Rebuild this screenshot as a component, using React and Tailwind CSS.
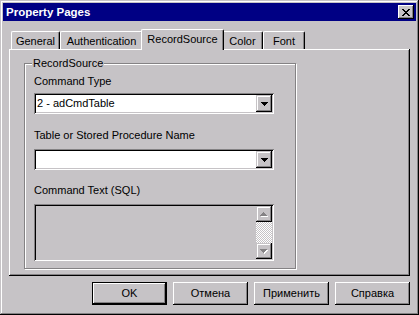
import React from "react";

const tabs = [
  { name: "General", w: "w-[49px]" },
  { name: "Authentication", w: "w-[83px]" },
  { name: "RecordSource", w: "w-[83px]", active: true },
  { name: "Color", w: "w-[41px]" },
  { name: "Font", w: "w-[42px]" },
];

function CloseGlyph() {
  return (
    <svg width="8" height="7" viewBox="0 0 8 7" shapeRendering="crispEdges">
      <path
        d="M0 0h2v1H0zM6 0h2v1H6zM1 1h2v1H1zM5 1h2v1H5zM2 2h4v1H2zM3 3h2v1H3zM2 4h4v1H2zM1 5h2v1H1zM5 5h2v1H5zM0 6h2v1H0zM6 6h2v1H6z"
        fill="#000"
      />
    </svg>
  );
}

function DownArrow({ color = "#000" }) {
  return (
    <svg width="7" height="4" viewBox="0 0 7 4" shapeRendering="crispEdges">
      <path d="M0 0h7v1H0zM1 1h5v1H1zM2 2h3v1H2zM3 3h1v1H3z" fill={color} />
    </svg>
  );
}

function DisabledArrow({ up }) {
  const d = up
    ? "M3 0h1v1H3zM2 1h3v1H2zM1 2h5v1H1zM0 3h7v1H0z"
    : "M0 0h7v1H0zM1 1h5v1H1zM2 2h3v1H2zM3 3h1v1H3z";
  return (
    <svg width="8" height="5" viewBox="0 0 8 5" shapeRendering="crispEdges">
      <path d={d} fill="#fff" transform="translate(1 1)" />
      <path d={d} fill="#848284" />
    </svg>
  );
}

function Combo({ value }) {
  return (
    <div className="w-[240px] h-[21px] bg-white flex items-center justify-between shadow-[inset_1px_1px_0_#848284,inset_-1px_-1px_0_#fff,inset_2px_2px_0_#000,inset_-2px_-2px_0_#c6c3c6]">
      <span className="pl-[3px] leading-[13px]">{value}</span>
      <div className="w-[16px] h-[17px] mr-[2px] bg-[#c6c3c6] flex items-center justify-center shadow-[inset_-1px_-1px_0_#000,inset_1px_1px_0_#c6c3c6,inset_-2px_-2px_0_#848284,inset_2px_2px_0_#fff]">
        <DownArrow />
      </div>
    </div>
  );
}

function Button({ label, isDefault }) {
  return (
    <div
      className={
        isDefault
          ? "w-[75px] h-[23px] border border-black shadow-[inset_-1px_-1px_0_#000,inset_1px_1px_0_#fff,inset_-2px_-2px_0_#848284] flex items-center justify-center"
          : "w-[75px] h-[23px] shadow-[inset_-1px_-1px_0_#000,inset_1px_1px_0_#fff,inset_-2px_-2px_0_#848284] flex items-center justify-center"
      }
    >
      <span className="leading-[13px]">{label}</span>
    </div>
  );
}

export default function App() {
  return (
    <div className="w-[419px] h-[315px] bg-[#c6c3c6] p-[3px] flex flex-col text-[11px] text-black font-['Liberation_Sans',Arial,sans-serif] shadow-[inset_-1px_-1px_0_#000,inset_1px_1px_0_#c6c3c6,inset_-2px_-2px_0_#848284,inset_2px_2px_0_#fff]">
      {/* title bar */}
      <div className="h-[18px] bg-[#000084] flex items-center justify-between pl-[3px] pr-[2px]">
        <span className="text-white font-bold text-[11.5px] leading-[14px]">Property Pages</span>
        <div className="w-[16px] h-[14px] bg-[#c6c3c6] flex items-center justify-center shadow-[inset_-1px_-1px_0_#000,inset_1px_1px_0_#fff,inset_-2px_-2px_0_#848284]">
          <CloseGlyph />
        </div>
      </div>

      <div className="flex flex-col px-[6px] pt-[8px]">
        {/* tabs */}
        <div className="h-[20px] flex items-end pl-[2px] relative z-10">
          {tabs.map((t) =>
            t.active ? (
              <div
                key={t.name}
                className={`${t.w} h-[21px] -mb-[1px] -mx-[2px] relative z-10 bg-[#c6c3c6] rounded-t-[2px] border-t border-l border-r border-t-white border-l-white border-r-black shadow-[inset_-1px_0_0_#848284] text-center pt-[3px] leading-[13px]`}
              >
                {t.name}
              </div>
            ) : (
              <div
                key={t.name}
                className={`${t.w} h-[18px] bg-[#c6c3c6] rounded-t-[2px] border-t border-l border-r border-t-white border-l-white border-r-black shadow-[inset_-1px_0_0_#848284] text-center pt-[3px] leading-[13px]`}
              >
                {t.name}
              </div>
            )
          )}
        </div>

        {/* panel */}
        <div className="h-[227px] pl-[15px] pt-[14px] shadow-[inset_-1px_-1px_0_#000,inset_1px_1px_0_#fff,inset_-2px_-2px_0_#848284]">
          <div className="relative w-[272px] h-[206px] border border-[#848284] shadow-[inset_1px_1px_0_#fff,1px_1px_0_#fff] pl-[9px] flex flex-col">
            <span className="absolute left-[7px] -top-[7px] px-[1px] bg-[#c6c3c6] leading-[13px]">RecordSource</span>
            <div className="mt-[11px] leading-[13px]">Command Type</div>
            <div className="mt-[5px]">
              <Combo value="2 - adCmdTable" />
            </div>
            <div className="mt-[15px] leading-[13px]">Table or Stored Procedure Name</div>
            <div className="mt-[7px]">
              <Combo value="" />
            </div>
            <div className="mt-[14px] leading-[13px]">Command Text (SQL)</div>
            <div className="mt-[7px] w-[240px] h-[57px] p-[2px] flex justify-end shadow-[inset_1px_1px_0_#848284,inset_-1px_-1px_0_#fff,inset_2px_2px_0_#000,inset_-2px_-2px_0_#c6c3c6]">
              <div className="w-[16px] flex flex-col">
                <div className="h-[16px] bg-[#c6c3c6] flex items-center justify-center shadow-[inset_-1px_-1px_0_#000,inset_1px_1px_0_#c6c3c6,inset_-2px_-2px_0_#848284,inset_2px_2px_0_#fff]">
                  <DisabledArrow up />
                </div>
                <div className="flex-1 bg-[repeating-conic-gradient(#fff_0_25%,#c6c3c6_0_50%)] bg-size-[2px_2px]" />
                <div className="h-[16px] bg-[#c6c3c6] flex items-center justify-center shadow-[inset_-1px_-1px_0_#000,inset_1px_1px_0_#c6c3c6,inset_-2px_-2px_0_#848284,inset_2px_2px_0_#fff]">
                  <DisabledArrow />
                </div>
              </div>
            </div>
          </div>
        </div>

        {/* buttons */}
        <div className="mt-[6px] flex justify-end gap-[6px]">
          <Button label="OK" isDefault />
          <Button label="Отмена" />
          <Button label="Применить" />
          <Button label="Справка" />
        </div>
      </div>
    </div>
  );
}
